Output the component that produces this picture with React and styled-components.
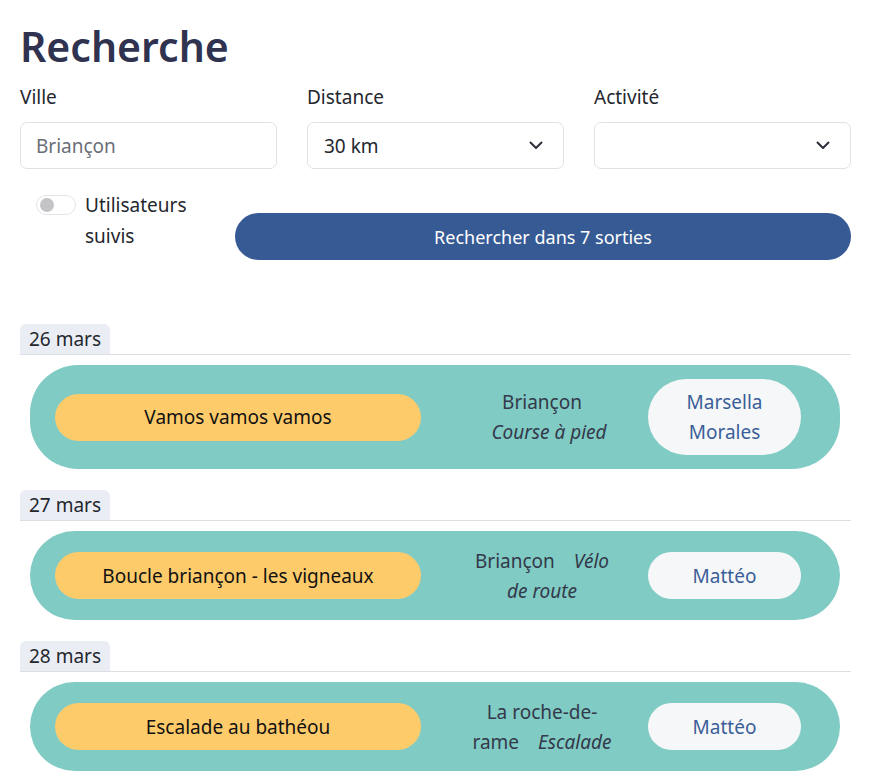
import React from "react";
import styled, { createGlobalStyle } from "styled-components";

const GlobalStyle = createGlobalStyle`
  html, body {
    margin: 0;
    padding: 0;
    background: #ffffff;
  }
  body {
    font-family: "Noto Sans", "Open Sans", sans-serif;
    font-size: 19px;
    color: #2b2f3a;
  }
  * { box-sizing: border-box; }
`;

const Page = styled.div`
  padding: 0 19px 0 20px;
`;

const Title = styled.h1`
  margin: 16px 0 0;
  font-size: 41px;
  line-height: 60px;
  font-weight: 600;
  color: #2f3350;
`;

const Filters = styled.div`
  display: grid;
  grid-template-columns: repeat(3, minmax(0, 1fr));
  column-gap: 30px;
  margin-top: 6px;
`;

const Field = styled.div`
  display: flex;
  flex-direction: column;
  min-width: 0;
`;

const Label = styled.label`
  line-height: 30px;
  color: #24272e;
  margin-bottom: 10px;
`;

const Input = styled.input`
  width: 100%;
  height: 47px;
  border: 1px solid #dee1e6;
  border-radius: 7px;
  padding: 0 15px;
  font: inherit;
  color: #6b6e76;
  outline: none;
  &::placeholder { color: #6b6e76; }
`;

const SelectBox = styled.div`
  height: 47px;
  border: 1px solid #dee1e6;
  border-radius: 7px;
  padding: 0 20px 0 16px;
  display: flex;
  align-items: center;
  justify-content: space-between;
  color: #24272e;
`;

const Chevron = () => (
  <svg width="14" height="9" viewBox="0 0 14 9" fill="none">
    <path d="M1.5 1.5 L7 7 L12.5 1.5" stroke="#2b2f3a" strokeWidth="2" strokeLinecap="round" strokeLinejoin="round" />
  </svg>
);

const ActionRow = styled.div`
  display: flex;
  align-items: flex-start;
  margin-top: 21px;
`;

const FollowToggle = styled.div`
  display: flex;
  align-items: flex-start;
  gap: 9px;
  padding-left: 16px;
  width: 215px;
  line-height: 31px;
  color: #24272e;
`;

const Switch = styled.span`
  flex: none;
  position: relative;
  width: 40px;
  height: 20px;
  margin-top: 5px;
  border: 1px solid #e2e4e8;
  border-radius: 10px;
  background: #fff;
  &::after {
    content: "";
    position: absolute;
    left: 3px;
    top: 2px;
    width: 14px;
    height: 14px;
    border-radius: 50%;
    background: #c4c4c6;
  }
`;

const SearchButton = styled.button`
  flex: 1;
  height: 47px;
  margin-top: 23px;
  border: none;
  border-radius: 24px;
  background: #365a93;
  color: #ffffff;
  font: inherit;
  font-size: 18px;
`;

const Results = styled.div`
  margin-top: 64px;
  display: flex;
  flex-direction: column;
  gap: 21px;
`;

const Group = styled.section`
  display: flex;
  flex-direction: column;
`;

const DateHeader = styled.div`
  border-bottom: 1px solid #dcdee3;
  margin-bottom: 10px;
`;

const DateTag = styled.span`
  display: block;
  width: 90px;
  height: 30px;
  line-height: 30px;
  text-align: center;
  background: #eaedf3;
  border-radius: 6px 6px 0 0;
  color: #24272e;
`;

const Card = styled.div`
  margin: 0 11px 0 10px;
  min-height: 89px;
  padding: 14px 39px 14px 25px;
  background: #80cbc4;
  border-radius: 48px;
  display: flex;
  align-items: center;
`;

const EventName = styled.div`
  flex: none;
  width: 366px;
  height: 47px;
  display: flex;
  align-items: center;
  justify-content: center;
  background: #fecb6b;
  border-radius: 24px;
  color: #111;
`;

const Where = styled.div`
  width: 152px;
  margin-left: 45px;
  text-align: center;
  line-height: 30px;
  color: #33394a;
`;

const Activity = styled.em`
  padding-left: 14px;
  font-weight: 400;
`;

const Organizer = styled.div`
  flex: none;
  width: 153px;
  margin-left: auto;
  padding: 8px 10px;
  min-height: 47px;
  display: flex;
  align-items: center;
  justify-content: center;
  text-align: center;
  line-height: 30px;
  background: #f6f7f9;
  border-radius: 40px;
  color: #3a5e98;
`;

const outings = [
  { date: "26 mars", name: "Vamos vamos vamos", city: "Briançon", activity: "Course à pied", who: "Marsella Morales" },
  { date: "27 mars", name: "Boucle briançon - les vigneaux", city: "Briançon", activity: "Vélo de route", who: "Mattéo" },
  { date: "28 mars", name: "Escalade au bathéou", city: "La roche-de-rame", activity: "Escalade", who: "Mattéo" },
];

export default function App() {
  return (
    <Page>
      <GlobalStyle />
      <Title>Recherche</Title>
      <Filters>
        <Field>
          <Label>Ville</Label>
          <Input placeholder="Briançon" />
        </Field>
        <Field>
          <Label>Distance</Label>
          <SelectBox>
            <span>30 km</span>
            <Chevron />
          </SelectBox>
        </Field>
        <Field>
          <Label>Activité</Label>
          <SelectBox>
            <span />
            <Chevron />
          </SelectBox>
        </Field>
      </Filters>
      <ActionRow>
        <FollowToggle>
          <Switch />
          <span>Utilisateurs suivis</span>
        </FollowToggle>
        <SearchButton>Rechercher dans 7 sorties</SearchButton>
      </ActionRow>
      <Results>
        {outings.map((o) => (
          <Group key={o.date}>
            <DateHeader>
              <DateTag>{o.date}</DateTag>
            </DateHeader>
            <Card>
              <EventName>{o.name}</EventName>
              <Where>
                {o.city} <Activity>{o.activity}</Activity>
              </Where>
              <Organizer>{o.who}</Organizer>
            </Card>
          </Group>
        ))}
      </Results>
    </Page>
  );
}
